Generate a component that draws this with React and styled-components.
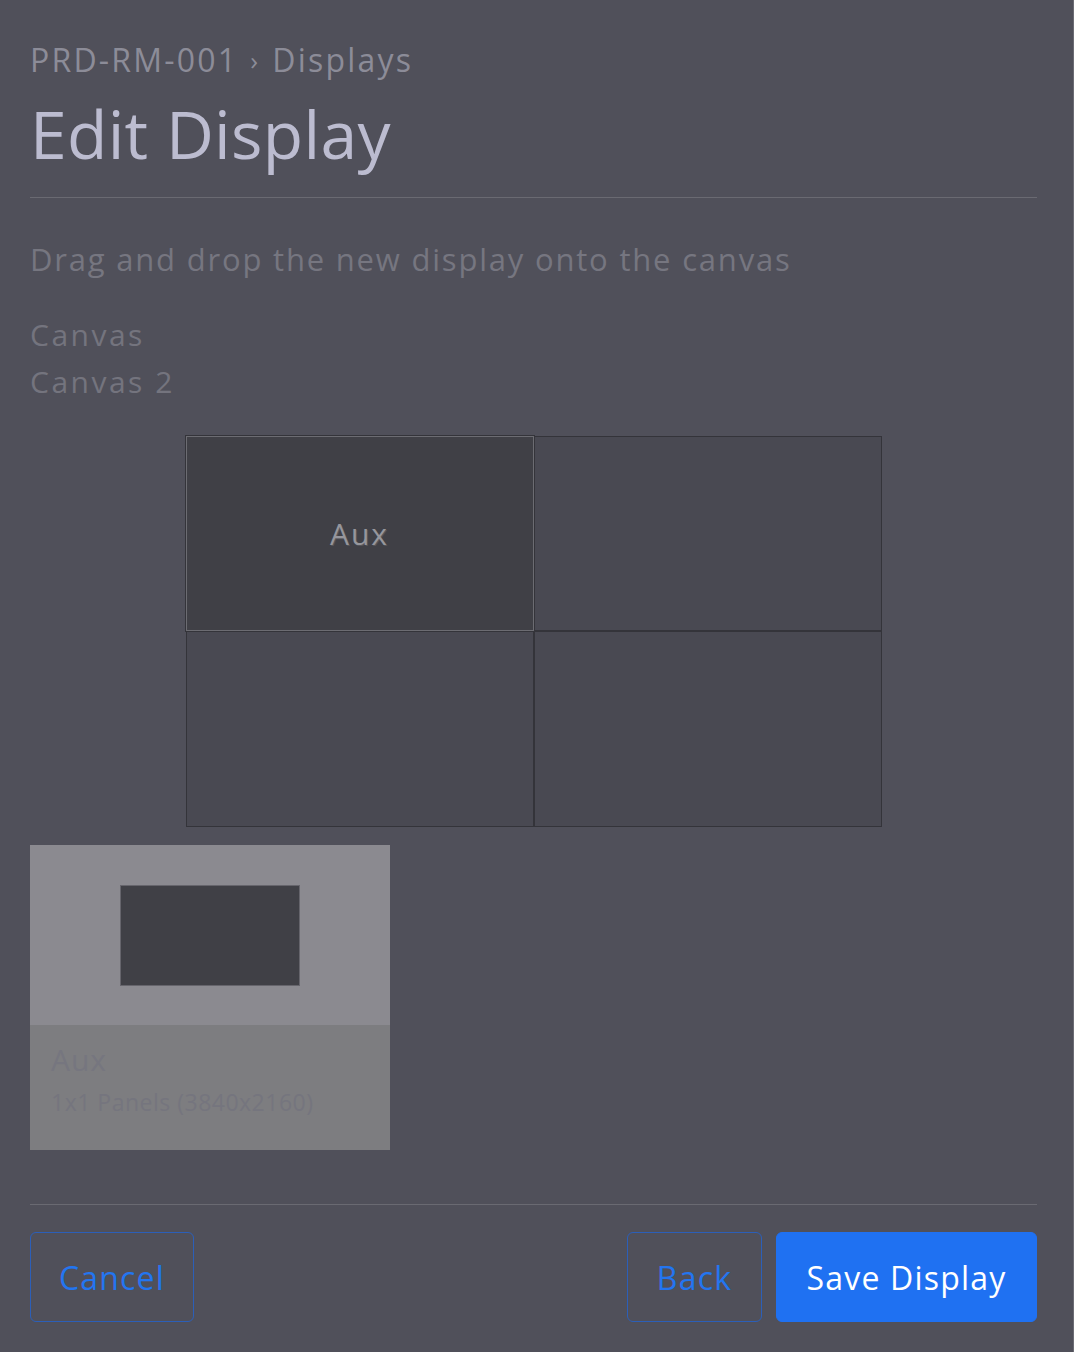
import React from "react";
import styled, { createGlobalStyle } from "styled-components";

const Global = createGlobalStyle`
  html, body { margin: 0; padding: 0; background: #50505a; }
  body { font-family: "Open Sans", "Noto Sans", sans-serif; }
  #root { min-height: 100vh; }
`;

const Page = styled.div`
  box-sizing: border-box;
  width: 1074px;
  min-height: 1352px;
  padding: 40px 36px 0 30px;
  display: flex;
  flex-direction: column;
  border-right: 1px solid #6c6c74;
`;

const Breadcrumb = styled.div`
  font-size: 32px;
  line-height: 40px;
  color: #8c8c98;
  letter-spacing: 2.2px;
  display: flex;
  gap: 12px;
  align-items: center;
`;

const Sep = styled.span`
  font-size: 26px;
`;

const Title = styled.h1`
  margin: 13px 0 0 0;
  font-size: 66px;
  line-height: 80px;
  font-weight: 400;
  color: #bcbcd0;
  letter-spacing: 0.3px;
`;

const Divider = styled.hr`
  border: none;
  height: 1px;
  background: #6a6a72;
  margin: ${(p) => p.$top}px 0 0 0;
  width: 100%;
`;

const Hint = styled.p`
  margin: 41px 0 0 0;
  font-size: 31px;
  line-height: 40px;
  color: #767680;
  letter-spacing: 1.8px;
`;

const CanvasList = styled.ul`
  list-style: none;
  margin: 36px 0 0 0;
  padding: 0;
  display: flex;
  flex-direction: column;
  gap: 7px;
`;

const CanvasItem = styled.li`
  font-size: 30px;
  line-height: 40px;
  color: #74747e;
  letter-spacing: 2.5px;
`;

const Grid = styled.div`
  align-self: center;
  margin-top: 34px;
  width: 696px;
  display: grid;
  grid-template-columns: 348px 348px;
  grid-template-rows: 195px 196px;
`;

const Cell = styled.div`
  box-sizing: border-box;
  border: 1px solid ${(p) => (p.$filled ? "#6c6c72" : "#34343a")};
  background: ${(p) => (p.$filled ? "#404046" : "#494952")};
  display: flex;
  align-items: center;
  justify-content: center;
  box-shadow: ${(p) => (p.$filled ? "0 0 0 1px #34343a" : "none")};
`;

const CellLabel = styled.span`
  font-size: 30px;
  letter-spacing: 2px;
  color: #96969c;
  text-shadow: 1px 1px 0 #55555a;
`;

const Card = styled.div`
  margin-top: 18px;
  width: 360px;
  display: flex;
  flex-direction: column;
`;

const CardPreview = styled.div`
  height: 180px;
  background: #8b8a90;
  display: flex;
  justify-content: center;
  align-items: center;
`;

const Screen = styled.div`
  box-sizing: border-box;
  width: 180px;
  height: 101px;
  background: #404046;
  border: 1px solid #66656c;
`;

const CardBody = styled.div`
  height: 125px;
  background: #7d7d80;
  padding: 16px 0 0 21px;
  box-sizing: border-box;
  display: flex;
  flex-direction: column;
`;

const CardName = styled.div`
  font-size: 30px;
  line-height: 38px;
  letter-spacing: 1px;
  color: #76767f;
`;

const CardMeta = styled.div`
  margin-top: 8px;
  font-size: 23px;
  line-height: 30px;
  letter-spacing: 0.5px;
  color: #75757e;
`;

const Footer = styled.div`
  margin-top: 27px;
  display: flex;
  align-items: center;
  gap: 14px;
`;

const Spacer = styled.div`
  flex: 1;
`;

const Button = styled.button`
  box-sizing: border-box;
  height: 90px;
  width: ${(p) => p.$w}px;
  padding: 0;
  border-radius: 6px;
  font-family: "Open Sans", sans-serif;
  font-size: 32px;
  letter-spacing: 1.2px;
  cursor: pointer;
  border: 1px solid ${(p) => (p.$primary ? "#1f71f2" : "#2c5fb8")};
  background: ${(p) => (p.$primary ? "#1f71f2" : "transparent")};
  color: ${(p) => (p.$primary ? "#ffffff" : "#2375f0")};
`;

export default function App() {
  return (
    <>
      <Global />
      <Page>
        <Breadcrumb>
          <span>PRD-RM-001</span>
          <Sep>›</Sep>
          <span>Displays</span>
        </Breadcrumb>
        <Title>Edit Display</Title>
        <Divider $top={24} />
        <Hint>Drag and drop the new display onto the canvas</Hint>
        <CanvasList>
          <CanvasItem>Canvas</CanvasItem>
          <CanvasItem>Canvas 2</CanvasItem>
        </CanvasList>
        <Grid>
          <Cell $filled>
            <CellLabel>Aux</CellLabel>
          </Cell>
          <Cell />
          <Cell />
          <Cell />
        </Grid>
        <Card>
          <CardPreview>
            <Screen />
          </CardPreview>
          <CardBody>
            <CardName>Aux</CardName>
            <CardMeta>1x1 Panels (3840x2160)</CardMeta>
          </CardBody>
        </Card>
        <Divider $top={54} />
        <Footer>
          <Button $w={164}>Cancel</Button>
          <Spacer />
          <Button $w={135}>Back</Button>
          <Button $primary $w={261}>Save Display</Button>
        </Footer>
      </Page>
    </>
  );
}
